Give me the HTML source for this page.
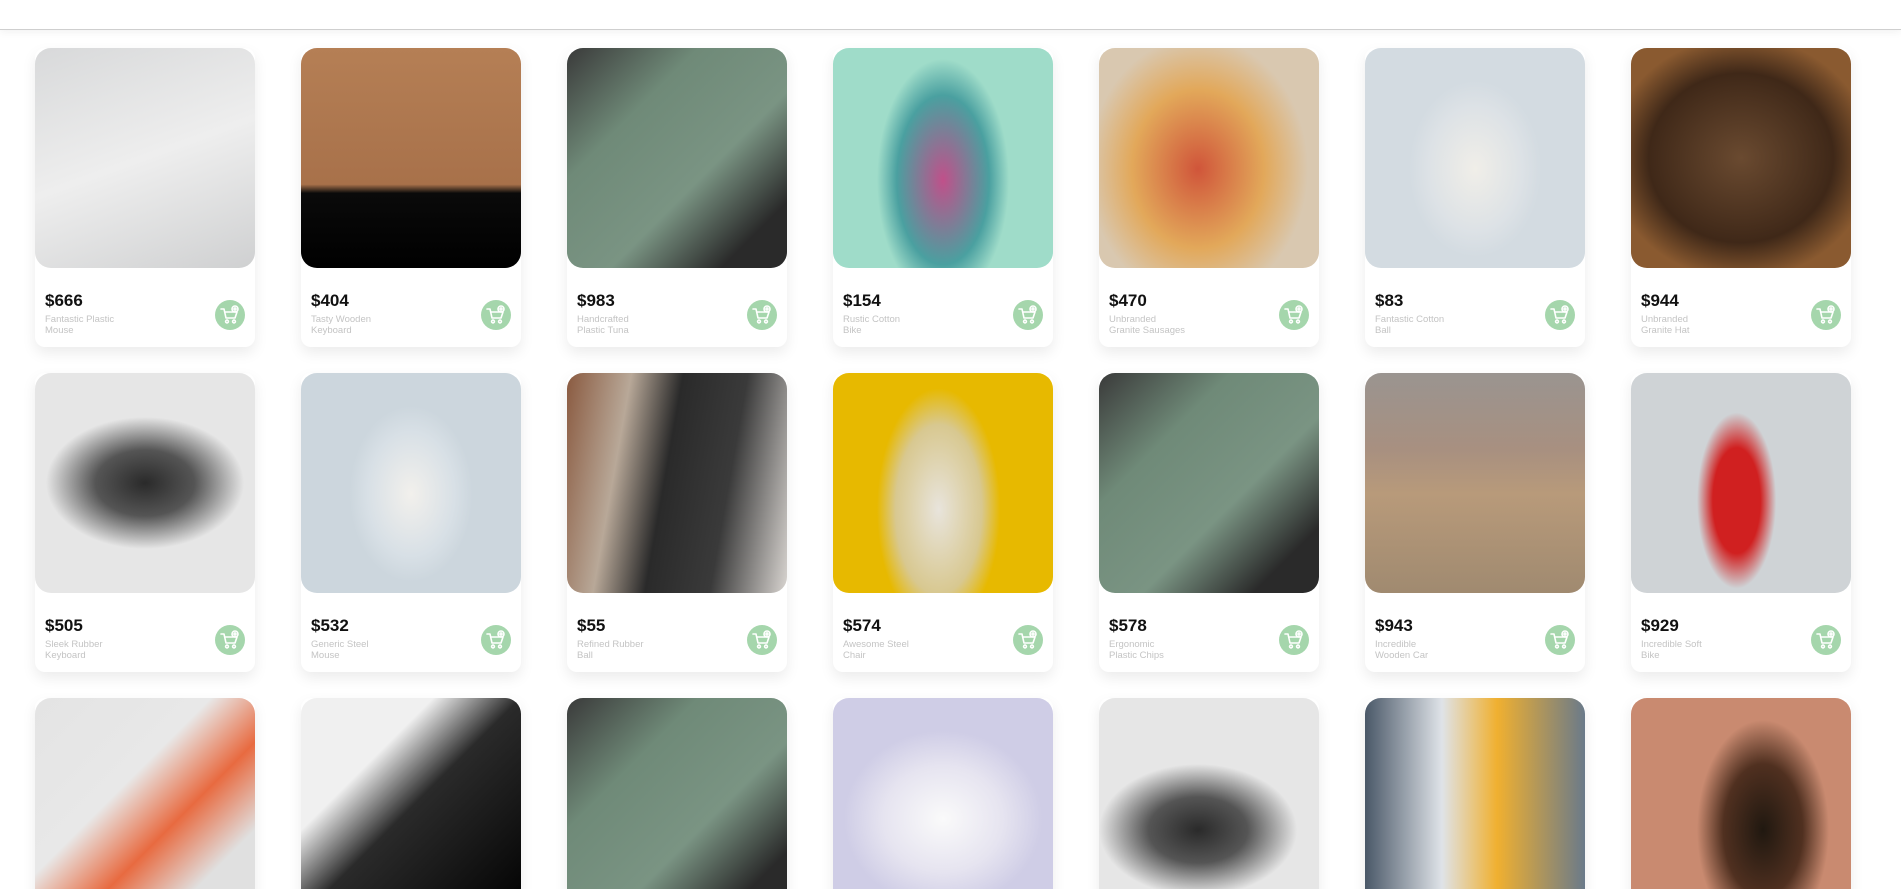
<!DOCTYPE html>
<html><head><meta charset="utf-8"><style>
*{margin:0;padding:0;box-sizing:border-box}
html{height:889px;overflow:hidden}
body{width:1901px;height:889px;overflow:hidden;background:#fff;font-family:"Liberation Sans","DejaVu Sans",sans-serif;position:relative}
.hdr{position:absolute;left:0;top:0;width:1901px;height:30px;background:#fff;border-bottom:1px solid #cfcfcf;box-shadow:0 2px 8px rgba(0,0,0,.06)}
.card{position:absolute;width:220px;height:299px;background:#fff;border-radius:10px;box-shadow:0 6px 14px rgba(0,0,0,.08)}
.img{position:absolute;left:0;top:0;width:220px;height:220px;border-radius:16px;overflow:hidden}
.price{position:absolute;left:10px;top:243px;font-size:17px;font-weight:bold;color:#111}
.desc{position:absolute;left:10px;top:266px;font-size:9.5px;line-height:11px;color:#c4c4c4;width:120px}
.cart{position:absolute;right:10px;top:252px;width:30px;height:30px;border-radius:50%;background:#a5d6ac}
.cart svg{position:absolute;left:5px;top:5px}
</style></head><body>
<div class="hdr"></div>
<div id="g"></div>
<script>
var data=[
["$666","Fantastic Plastic|Mouse","linear-gradient(160deg,#d8d9da,#eeeeee 50%,#cfd0d1)"],
["$404","Tasty Wooden|Keyboard","linear-gradient(180deg,#b57f55 0%,#a8714a 62%,#0a0a0a 66%,#000 100%)"],
["$983","Handcrafted|Plastic Tuna","linear-gradient(135deg,#3a3a3a 0%,#6f8a78 30%,#7a9483 60%,#2a2a2a 85%)"],
["$154","Rustic Cotton|Bike","radial-gradient(ellipse 30% 55% at 50% 60%,#c0508a 0,#4aa0a0 70%,#9fdcc9 100%)"],
["$470","Unbranded|Granite Sausages","radial-gradient(ellipse 50% 60% at 45% 55%,#d0553a 0,#e2a85a 60%,#d9c8b0 100%)"],
["$83","Fantastic Cotton|Ball","radial-gradient(ellipse 30% 40% at 50% 55%,#f0eee8 0,#dde2e6 70%,#d3dbe1 100%)"],
["$944","Unbranded|Granite Hat","radial-gradient(ellipse 60% 55% at 50% 50%,#6a4a30 0,#3f2818 70%,#8a5a30 100%)"],
["$505","Sleek Rubber|Keyboard","radial-gradient(ellipse 45% 30% at 50% 50%,#2a2a2a 0,#555 50%,#e6e6e6 100%)"],
["$532","Generic Steel|Mouse","radial-gradient(ellipse 28% 40% at 50% 55%,#f2f0ec 0,#d8e0e6 70%,#ccd6dd 100%)"],
["$55","Refined Rubber|Ball","linear-gradient(100deg,#8a5a40 0%,#b8a898 25%,#2a2a2a 45%,#3a3a3a 70%,#d8d4d0 100%)"],
["$574","Awesome Steel|Chair","radial-gradient(ellipse 28% 55% at 48% 62%,#e8e4dc 0,#d8c890 70%,#e7b900 100%)"],
["$578","Ergonomic|Plastic Chips","linear-gradient(135deg,#3a3a3a 0%,#6f8a78 30%,#7a9483 60%,#2a2a2a 85%)"],
["$943","Incredible|Wooden Car","linear-gradient(180deg,#9a9490 0%,#a89080 35%,#b89a7a 55%,#a08a70 100%)"],
["$929","Incredible Soft|Bike","radial-gradient(ellipse 18% 40% at 48% 58%,#d02020 0,#d02020 60%,#cfd3d6 100%)"],
["","|","linear-gradient(135deg,#e4e4e4 0%,#e8e8e8 40%,#e86a40 60%,#e0e0e0 80%)"],
["","|","linear-gradient(135deg,#f0f0f0 0%,#f0f0f0 30%,#2a2a2a 50%,#1a1a1a 70%,#000 100%)"],
["","|","linear-gradient(135deg,#3a3a3a 0%,#6f8a78 30%,#7a9483 60%,#2a2a2a 85%)"],
["","|","radial-gradient(ellipse 45% 40% at 50% 55%,#fafafa 0,#e6e4f0 60%,#cfcde6 100%)"],
["","|","radial-gradient(ellipse 45% 30% at 45% 60%,#2a2a2a 0,#555 50%,#e6e6e6 100%)"],
["","|","linear-gradient(90deg,#4a5868 0%,#dfe3e8 35%,#f0b030 60%,#6a7a8a 100%)"],
["","|","radial-gradient(ellipse 30% 50% at 60% 60%,#201810 0,#503020 60%,#c98a70 100%)"]
];
var cart='<svg width="20" height="20" viewBox="0 0 20 20" fill="none" stroke="#fff" stroke-width="1.6" stroke-linecap="round" stroke-linejoin="round"><path d="M1 4h3l2 9h9l2-6H5"/><circle cx="7" cy="16.5" r="1.4"/><circle cx="14" cy="16.5" r="1.4"/><circle cx="15" cy="4" r="3"/><path d="M15 2.5v3M13.5 4h3"/></svg>';
var h='';
for(var i=0;i<21;i++){var c=i%7,r=Math.floor(i/7);var d=data[i];var w=d[1].split('|');
h+='<div class="card" style="left:'+(35+c*266)+'px;top:'+(48+r*325)+'px"><div class="img" style="background:'+d[2]+'"></div><div class="price">'+d[0]+'</div><div class="desc">'+w[0]+'<br>'+w[1]+'</div><div class="cart">'+cart+'</div></div>';}
document.getElementById('g').innerHTML=h;
</script>
</body></html>
